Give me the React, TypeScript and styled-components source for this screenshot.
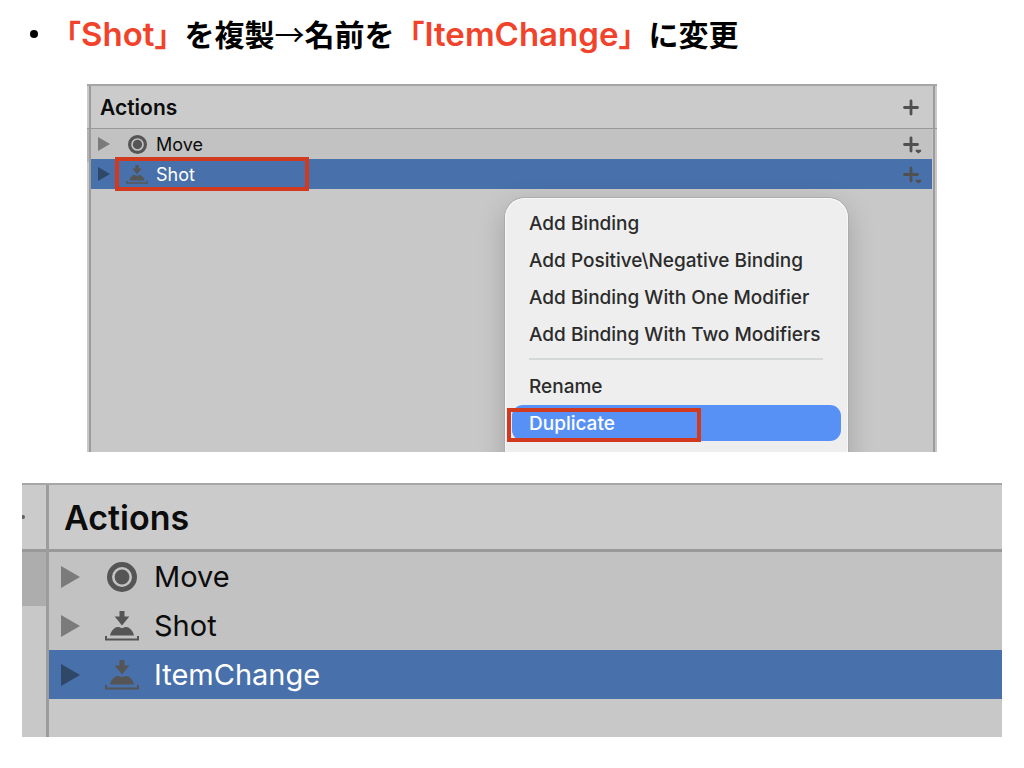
import React from "react";
import styled, { createGlobalStyle } from "styled-components";

const GlobalStyle = createGlobalStyle`
  *, *::before, *::after { box-sizing: border-box; }
  body { margin: 0; background: #ffffff; }
  button { border: 0; margin: 0; padding: 0; background: none; color: inherit; font: inherit; cursor: pointer; }
  ul { list-style: none; margin: 0; padding: 0; }
  svg { display: block; }
`;

const ui = `"Inter", "Liberation Sans", sans-serif`;

const Slide = styled.main`
  display: flex;
  flex-direction: column;
  gap: 31px;
  padding: 14px 22px 31px;
  font-family: ${ui};
`;

const Title = styled.h1`
  display: flex;
  align-items: center;
  height: 39px;
  margin: 0;
  padding-left: 8px;
  white-space: nowrap;
  font: 700 30px/37px "Noto Sans CJK JP", sans-serif;
  color: #000000;
`;

const Bullet = styled.span`
  width: 8px;
  height: 8px;
  margin-right: 13px;
  border-radius: 50%;
  background: #000000;
`;

const Term = styled.span`
  color: #f1432b;
`;

const Arrow = styled.span`
  font-weight: 400;
`;

const Latin = styled.span`
  font-family: ${ui};
  font-size: 33px;
  font-weight: 600;
`;

const Panel = styled.section<{ $inset: number }>`
  position: relative;
  display: flex;
  overflow: hidden;
  margin: 0 ${(p) => p.$inset}px;
  border-top: 2px solid #a6a6a6;
  background: #c8c8c8;
`;

const Neighbour = styled.div<{ $width: number }>`
  flex: none;
  width: ${(p) => p.$width}px;
`;

const NeighbourHead = styled.div<{ $height: number; $line: number }>`
  display: flex;
  align-items: center;
  height: ${(p) => p.$height}px;
  border-bottom: ${(p) => p.$line}px solid #999999;
  background: #cbcbcb;
`;

const Tick = styled.span`
  width: 3px;
  height: 4px;
  border-radius: 0 2px 2px 0;
  background: #606060;
`;

const NeighbourRow = styled.div<{ $height: number; $shade: string }>`
  height: ${(p) => p.$height}px;
  background: ${(p) => p.$shade};
`;

const Column = styled.div<{ $edge: number; $tail: number; $right?: boolean }>`
  flex: 1;
  min-width: 0;
  padding-bottom: ${(p) => p.$tail}px;
  border-left: ${(p) => p.$edge}px solid #9c9c9c;
  border-right: ${(p) => (p.$right ? "2px solid #9c9c9c" : "0")};
`;

const Head = styled.header<{ $large?: boolean }>`
  display: flex;
  align-items: center;
  justify-content: space-between;
  height: ${(p) => (p.$large ? 67 : 43)}px;
  padding: ${(p) => (p.$large ? "0 15px" : "0 11px 0 9px")};
  border-bottom: ${(p) => (p.$large ? 3 : 1)}px solid #999999;
  background: #cbcbcb;
`;

const Heading = styled.h2<{ $large?: boolean }>`
  margin: 0;
  font-size: ${(p) => (p.$large ? 34 : 21)}px;
  font-weight: 600;
  color: #0c0c0c;
`;

const Row = styled.li<{ $large?: boolean; $selected?: boolean }>`
  display: flex;
  align-items: center;
  height: ${(p) => (p.$large ? 49 : 30)}px;
  padding-left: ${(p) => (p.$large ? 12 : 7)}px;
  margin-right: ${(p) => (p.$large ? 0 : 1)}px;
  padding-right: 10px;
  background: ${(p) => (p.$selected ? "#4870ab" : "#c2c2c2")};
  color: ${(p) => (p.$selected ? "#ffffff" : "#0c0c0c")};
`;

const RowIcon = styled.span<{ $large?: boolean }>`
  flex: none;
  display: grid;
  place-items: center;
  width: ${(p) => (p.$large ? 34 : 22)}px;
  margin-left: ${(p) => (p.$large ? 25 : 16)}px;
  margin-right: ${(p) => (p.$large ? 15 : 8)}px;
`;

const RowLabel = styled.span<{ $large?: boolean }>`
  flex: 1;
  font-size: ${(p) => (p.$large ? 29 : 18)}px;
`;

const Marker = styled.div<{ $top: number; $left?: number; $right?: number }>`
  position: absolute;
  top: ${(p) => p.$top}px;
  left: ${(p) => (p.$left === undefined ? "auto" : `${p.$left}px`)};
  right: ${(p) => (p.$right === undefined ? "auto" : `${p.$right}px`)};
  width: 194px;
  height: 34px;
  border: 4px solid #d23a20;
  pointer-events: none;
`;

const Menu = styled.div`
  position: absolute;
  top: 112px;
  right: 89px;
  display: flex;
  flex-direction: column;
  gap: 1px;
  width: 343px;
  height: 320px;
  padding: 7px;
  border-radius: 20px;
  background: #eeeeee;
  box-shadow: 0 0 0 1px #ababab, inset 0 0 0 1px #f8f8f8, 0 8px 28px rgba(0, 0, 0, 0.2);
`;

const MenuItem = styled.button<{ $active?: boolean }>`
  flex: none;
  height: 36px;
  padding: 0 17px;
  border-radius: 11px;
  text-align: left;
  white-space: nowrap;
  font-size: 19px;
  font-weight: 500;
  background: ${(p) => (p.$active ? "#5891f5" : "transparent")};
  color: ${(p) => (p.$active ? "#ffffff" : "#2b2b2b")};
`;

const Separator = styled.hr`
  flex: none;
  width: 294px;
  height: 2px;
  margin: 5px 17px 7px;
  border: 0;
  background: #d5d8d8;
`;

function Disclosure({ large, selected }: { large?: boolean; selected?: boolean }) {
  return (
    <svg width={large ? 19 : 12} height={large ? 22 : 14} viewBox="0 0 19 22">
      <path d="M0 0L19 11L0 22Z" fill={selected ? "#2f4868" : "#7b7b7b"} />
    </svg>
  );
}

function ValueIcon({ large }: { large?: boolean }) {
  const size = large ? 30 : 19;
  return (
    <svg width={size} height={size} viewBox="0 0 30 30">
      <circle cx="15" cy="15" r="12.5" fill="none" stroke="#555555" strokeWidth="5" />
      <circle cx="15" cy="15" r="7.4" fill="#555555" />
    </svg>
  );
}

function ButtonIcon({ large }: { large?: boolean }) {
  return (
    <svg width={large ? 34 : 22} height={large ? 30 : 19} viewBox="0 0 34 30">
      <path
        d="M14.5 0H19.5V5.5H24.3L17 14.5L9.7 5.5H14.5Z M5 24.5C5.6 21 8 18.5 10.5 16.6C12.2 15.3 14 16 17 17.2C20 16 21.8 15.3 23.5 16.6C26 18.5 28.4 21 29 24.5Z M0 25H2V27.4H32V25H34V29.5H0Z"
        fill="#555555"
      />
    </svg>
  );
}

function AddIcon({ arrow }: { arrow?: boolean }) {
  return (
    <svg width="20" height="19" viewBox="0 0 20 19">
      <path d="M9 3V16M2.5 9.5H15.5" stroke="#505050" strokeWidth="2.8" strokeLinecap="round" fill="none" />
      {arrow && <path d="M13.6 14.8H19.2L19 16.6L16.4 18.6L13.8 16.6Z" fill="#505050" />}
    </svg>
  );
}

interface Action {
  name: string;
  kind: "value" | "button";
  selected?: boolean;
}

function ActionRow({ action, large }: { action: Action; large?: boolean }) {
  return (
    <Row $large={large} $selected={action.selected}>
      <button type="button" aria-label={`Expand ${action.name}`}>
        <Disclosure large={large} selected={action.selected} />
      </button>
      <RowIcon $large={large}>
        {action.kind === "value" ? <ValueIcon large={large} /> : <ButtonIcon large={large} />}
      </RowIcon>
      <RowLabel $large={large}>{action.name}</RowLabel>
      {!large && (
        <button type="button" aria-label={`Add binding to ${action.name}`}>
          <AddIcon arrow />
        </button>
      )}
    </Row>
  );
}

const before: Action[] = [
  { name: "Move", kind: "value" },
  { name: "Shot", kind: "button", selected: true },
];

const after: Action[] = [
  { name: "Move", kind: "value" },
  { name: "Shot", kind: "button" },
  { name: "ItemChange", kind: "button", selected: true },
];

export default function App() {
  return (
    <>
      <GlobalStyle />
      <Slide>
        <Title>
          <Bullet />
          <span>
            <Term>「<Latin>Shot</Latin>」</Term>を複製<Arrow>→</Arrow>名前を<Term>「<Latin>ItemChange</Latin>」</Term>に変更
          </span>
        </Title>

        <Panel $inset={65}>
          <Neighbour $width={2}>
            <NeighbourHead $height={43} $line={1} />
            <NeighbourRow $height={33} $shade="#b4b4b4" />
          </Neighbour>
          <Column $edge={2} $tail={263} $right>
            <Head>
              <Heading>Actions</Heading>
              <button type="button" aria-label="Add action">
                <AddIcon />
              </button>
            </Head>
            <ul>
              {before.map((a) => (
                <ActionRow key={a.name} action={a} />
              ))}
            </ul>
          </Column>
          <Neighbour $width={2}>
            <NeighbourHead $height={43} $line={1} />
          </Neighbour>
          <Marker $top={71} $left={28} />
          <Menu>
            <MenuItem type="button">Add Binding</MenuItem>
            <MenuItem type="button">Add Positive\Negative Binding</MenuItem>
            <MenuItem type="button">Add Binding With One Modifier</MenuItem>
            <MenuItem type="button">Add Binding With Two Modifiers</MenuItem>
            <Separator />
            <MenuItem type="button">Rename</MenuItem>
            <MenuItem type="button" $active>Duplicate</MenuItem>
          </Menu>
          <Marker $top={322} $right={236} />
        </Panel>

        <Panel $inset={0}>
          <Neighbour $width={24}>
            <NeighbourHead $height={67} $line={3}>
              <Tick />
            </NeighbourHead>
            <NeighbourRow $height={54} $shade="#adadad" />
          </Neighbour>
          <Column $edge={3} $tail={38}>
            <Head $large>
              <Heading $large>Actions</Heading>
            </Head>
            <ul>
              {after.map((a) => (
                <ActionRow key={a.name} action={a} large />
              ))}
            </ul>
          </Column>
        </Panel>
      </Slide>
    </>
  );
}
